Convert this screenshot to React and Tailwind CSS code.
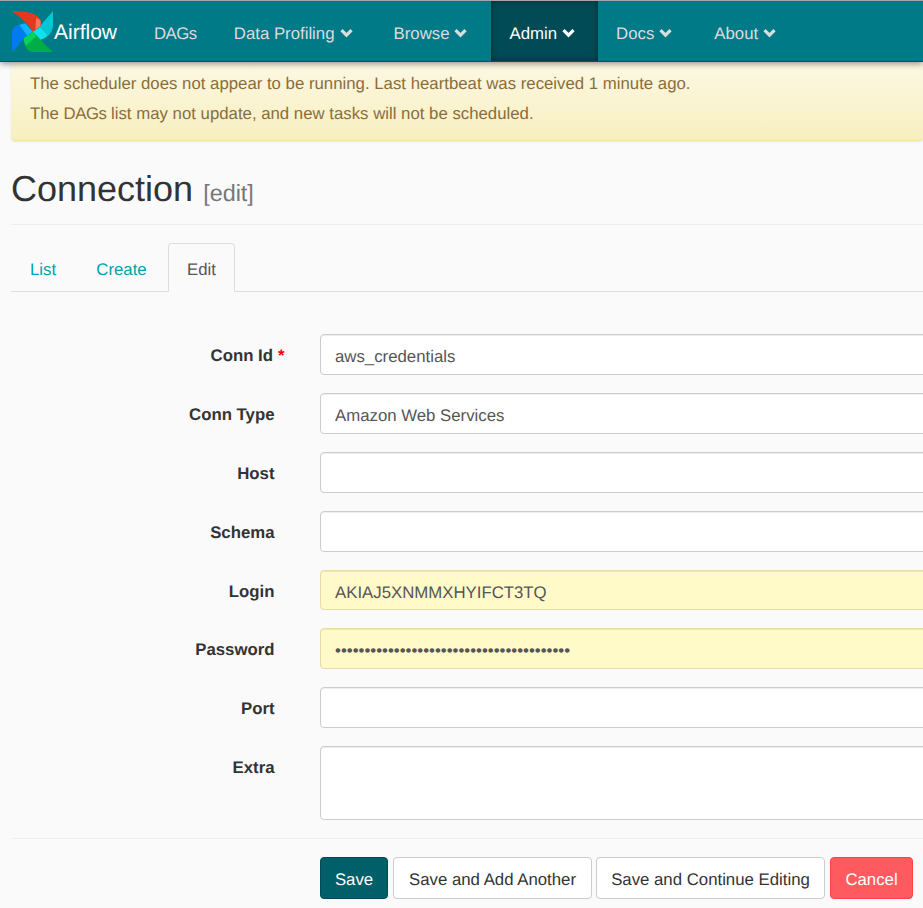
const sans = "font-['Liberation_Sans',Arial,sans-serif] [text-rendering:geometricPrecision]";

function Chevron() {
  return (
    <svg viewBox="0 0 14 10" className="w-[13px] h-[10px] ml-[5px] mr-[6px] -mt-[1px]" fill="none" stroke="currentColor" strokeWidth="3.4">
      <path d="M1.6 2 7 7.4 12.4 2" />
    </svg>
  );
}

function Logo() {
  return (
    <svg viewBox="0 0 122 122" className="w-[41px] h-[41px] shrink-0">
      <path d="M122 0 L122 45 C120 65 105 85 75 87 L62 62 L85 45 C95 30 110 15 122 0Z" fill="#00c7d4" />
      <path d="M62 62 L75 87 C88 86 98 80 105 72 L85 50Z" fill="#11e1ee" />
      <path d="M122 122 L60 122 C45 120 35 100 35 80 L62 62 L85 85 C95 100 110 112 122 122Z" fill="#00ad46" />
      <path d="M62 62 L35 80 C35 88 37 96 42 103 L72 75Z" fill="#04d659" />
      <path d="M0 122 L0 60 C2 50 15 37 40 37 L62 62 L35 80 C25 95 12 110 0 122Z" fill="#017cee" />
      <path d="M40 37 L62 62 L45 73 L22 42 C28 39 34 37 40 37Z" fill="#0cb6ff" />
      <path d="M0 0 L40 2 C60 5 85 15 85 30 L85 45 L62 62 C50 40 25 20 0 0Z" fill="#e43921" />
      <path d="M72 20 C80 24 85 27 85 30 L85 45 L70 56 C70 44 71 30 72 20Z" fill="#ff7557" />
    </svg>
  );
}

function NavItem({ label, chevron, active, tight, narrow }) {
  return (
    <a
      className={`flex items-center h-full pl-[18px] pt-[5px] text-[16.8px] ${chevron ? (narrow ? "pr-[17px]" : "pr-[18px]") : "pr-[19px]"} ${tight ? "tracking-[-0.5px]" : ""} ${active ? "bg-[#004b55] text-white shadow-[inset_0_0_6px_rgba(0,0,0,0.4)]" : "text-[#dcdcdc]"}`}
    >
      {label}
      {chevron && <Chevron />}
    </a>
  );
}

function Field({ label, required, value, autofill, type = "text", rows, short }) {
  const input = `w-full block border rounded-[4px] px-[14px] text-[16.8px] text-[#555555] outline-none shadow-[inset_0_1px_1px_rgba(0,0,0,0.075)] ${sans} ${
    autofill ? "bg-[#fffac8] border-[#ebd9a8]" : "bg-white border-[#cccccc]"
  }`;
  return (
    <div className="flex items-start">
      <label className="w-[263.5px] shrink-0 pt-[10px] text-right text-[16.8px] leading-[23px] font-bold text-[#333333]">
        {label}
        {required && <span className="text-[#ff0000] -mr-[10px] ml-[5px] font-bold">*</span>}
      </label>
      <div className="ml-[45.5px] flex-1">
        {rows ? (
          <textarea readOnly className={`${input} h-[74px] resize-none`} />
        ) : (
          <input readOnly type={type} value={value || ""} className={`${input} ${short ? "h-[40px] pt-[5px]" : "h-[41px] pt-[4px]"}`} />
        )}
      </div>
    </div>
  );
}

export default function App() {
  return (
    <div className={`w-[923px] h-[908px] overflow-hidden bg-[#fafafa] relative ${sans}`}>
      <nav className="relative z-10 h-[62px] bg-[#007a87] border-t border-[#a6a6a6] border-b border-b-[#00525c] shadow-[0_2px_6px_rgba(0,0,0,0.4)] flex items-stretch">
        <div className="flex items-center pl-[12px] w-[136px] shrink-0">
          <Logo />
          <span className="text-white text-[21px] ml-[1px] pt-[3px]">Airflow</span>
        </div>
        <NavItem label="DAGs" tight />
        <NavItem label="Data Profiling" chevron narrow />
        <NavItem label="Browse" chevron />
        <NavItem label="Admin" chevron active narrow />
        <NavItem label="Docs" chevron />
        <NavItem label="About" chevron />
      </nav>

      <div className="ml-[11px] h-[80px] -mt-px rounded-b-[4px] bg-gradient-to-b from-[#fcf8e3] to-[#f8efc0] shadow-[0_1px_2px_rgba(0,0,0,0.08)] border-b border-[#f5e79e] pl-[19px] pt-[8px] text-[16.8px] leading-[29.5px] text-[#8a6d3b]">
        <div>The scheduler does not appear to be running. Last heartbeat was received 1 minute ago.</div>
        <div>The <span className="tracking-[-0.5px]">DAGs</span> list may not update, and new tasks will not be scheduled.</div>
      </div>

      <div className="ml-[11px]">
        <div className="pt-[26px] pb-[12px] border-b border-[#eeeeee] h-[84px]">
          <h1 className="text-[36px] leading-[44px] text-[#333333] font-normal">
            Connection <small className="text-[23.4px] text-[#777777]">[edit]</small>
          </h1>
        </div>

        <div className="flex mt-[18px] h-[49px] border-b border-[#dddddd] text-[16.8px]">
          <a className="w-[64px] h-[49px] pt-[4px] flex items-center justify-center text-[#00a0b0]">List</a>
          <a className="w-[93px] h-[49px] pt-[4px] flex items-center justify-center text-[#00a0b0]">Create</a>
          <a className="w-[67px] h-[49px] pt-[4px] flex items-center justify-center text-[#555555] bg-[#fafafa] border border-[#dddddd] border-b-[#fafafa] rounded-t-[4px]">Edit</a>
        </div>

        <form className="pt-[42px]">
          <div className="flex flex-col gap-[18px] w-[1100px]">
            <Field label="Conn Id" required value="aws_credentials" />
            <Field label="Conn Type" value="Amazon Web Services" />
            <Field label="Host" />
            <Field label="Schema" />
            <Field label="Login" value="AKIAJ5XNMMXHYIFCT3TQ" autofill short />
            <Field label="Password" value="aaaaaaaaaaaaaaaaaaaaaaaaaaaaaaaaaaaaaaaa" type="password" autofill />
            <Field label="Port" />
            <Field label="Extra" rows />
          </div>
          <div className="mt-[18px] border-t border-[#eeeeee] pt-[18px] pl-[309px] flex text-[16.8px]">
            <button type="button" className={`h-[42px] w-[68px] pt-[3px] rounded-[4px] bg-[#005f69] border border-[#004b55] text-white ${sans}`}>Save</button>
            <button type="button" className={`h-[42px] w-[199px] ml-[5px] pt-[3px] rounded-[4px] bg-white border border-[#cccccc] text-[#333333] ${sans}`}>Save and Add Another</button>
            <button type="button" className={`h-[42px] w-[229px] ml-[4px] pt-[3px] rounded-[4px] bg-white border border-[#cccccc] text-[#333333] ${sans}`}>Save and Continue Editing</button>
            <button type="button" className={`h-[42px] w-[83px] ml-[5px] pt-[3px] rounded-[4px] bg-[#ff5a5f] border border-[#ff4146] text-white ${sans}`}>Cancel</button>
          </div>
        </form>
      </div>
    </div>
  );
}
